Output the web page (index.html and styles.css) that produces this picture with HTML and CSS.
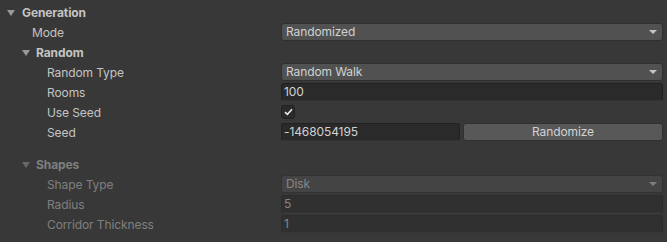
FILE: index.html
```html
<!DOCTYPE html>
<html lang="en">
    <head>
        <meta charset="utf-8">
        <title>Generation</title>
        <link rel="stylesheet" href="styles.css">
    </head>
    <body>
    <div class="inspector">
        <div class="head lvl0"><span class="arrow"></span>Generation</div>
        <div class="row">
            <div class="label lvl1">Mode</div>
            <div class="value"><div class="dropdown">Randomized<span class="caret"></span></div></div>
        </div>

        <div class="head lvl1"><span class="arrow"></span>Random</div>
        <div class="row">
            <div class="label lvl2">Random Type</div>
            <div class="value"><div class="dropdown">Random Walk<span class="caret"></span></div></div>
        </div>
        <div class="row">
            <div class="label lvl2">Rooms</div>
            <div class="value"><div class="field">100</div></div>
        </div>
        <div class="row">
            <div class="label lvl2">Use Seed</div>
            <div class="value">
                <div class="check">
                    <svg width="9" height="8" viewBox="0 0 9 8"><path d="M1 4.2 L3.4 6.4 L8 1.2" fill="none" stroke="#e8e8e8" stroke-width="1.6"/></svg>
                </div>
            </div>
        </div>
        <div class="row">
            <div class="label lvl2">Seed</div>
            <div class="value seed">
                <div class="field seed-field">-1468054195</div>
                <div class="button">Randomize</div>
            </div>
        </div>

        <div class="disabled">
            <div class="head lvl1 shapes"><span class="arrow"></span>Shapes</div>
            <div class="row">
                <div class="label lvl2">Shape Type</div>
                <div class="value"><div class="dropdown">Disk<span class="caret"></span></div></div>
            </div>
            <div class="row">
                <div class="label lvl2">Radius</div>
                <div class="value"><div class="field">5</div></div>
            </div>
            <div class="row">
                <div class="label lvl2">Corridor Thickness</div>
                <div class="value"><div class="field">1</div></div>
            </div>
        </div>
    </div>
    </body>
</html>
```

FILE: styles.css
```css
*{margin:0; padding:0; box-sizing:border-box;}
body{background:#383838; font-family:Inter, "Liberation Sans", sans-serif; font-size:12px; letter-spacing:-0.1px; color:#c4c4c4;}
.inspector{padding:2px 4px 0 0;}

.head{height:20px; display:flex; align-items:center; font-weight:bold; color:#c4c4c4;}
.head.lvl0{padding-left:7px;}
.head.lvl1{padding-left:22px;}
.arrow{width:0; height:0; border-left:4px solid transparent; border-right:4px solid transparent; border-top:6px solid #999; margin-right:7px; margin-top:1px;}
.head.lvl1 .arrow{margin-right:6px;}

.row{height:20px; display:flex; align-items:center;}
.label{width:281px; flex:none; white-space:nowrap;}
.label.lvl1{padding-left:32px;}
.label.lvl2{padding-left:47px;}
.value{flex:1; display:flex; align-items:center; min-width:0;}

.dropdown{flex:1; height:18px; background:#515151; border:1px solid #303030; border-radius:3px; color:#d2d2d2; padding-left:4px; line-height:16px; position:relative;}
.caret{position:absolute; right:5px; top:6px; width:0; height:0; border-left:4px solid transparent; border-right:4px solid transparent; border-top:4px solid #c4c4c4;}

.field{flex:1; height:18px; background:#2a2a2a; border:1px solid #212121; border-bottom-color:#333; border-radius:3px; color:#d2d2d2; padding-left:2px; line-height:16px;}

.check{width:14px; height:14px; background:#2a2a2a; border:1px solid #212121; border-radius:3px; display:flex; align-items:center; justify-content:center;}

.seed .seed-field{flex:none; width:179px;}
.button{flex:1; height:18px; margin-left:3px; background:#585858; border:1px solid #303030; border-radius:3px; color:#d2d2d2; text-align:center; line-height:16px;}

.disabled{opacity:0.5; margin-top:12px;}
```
